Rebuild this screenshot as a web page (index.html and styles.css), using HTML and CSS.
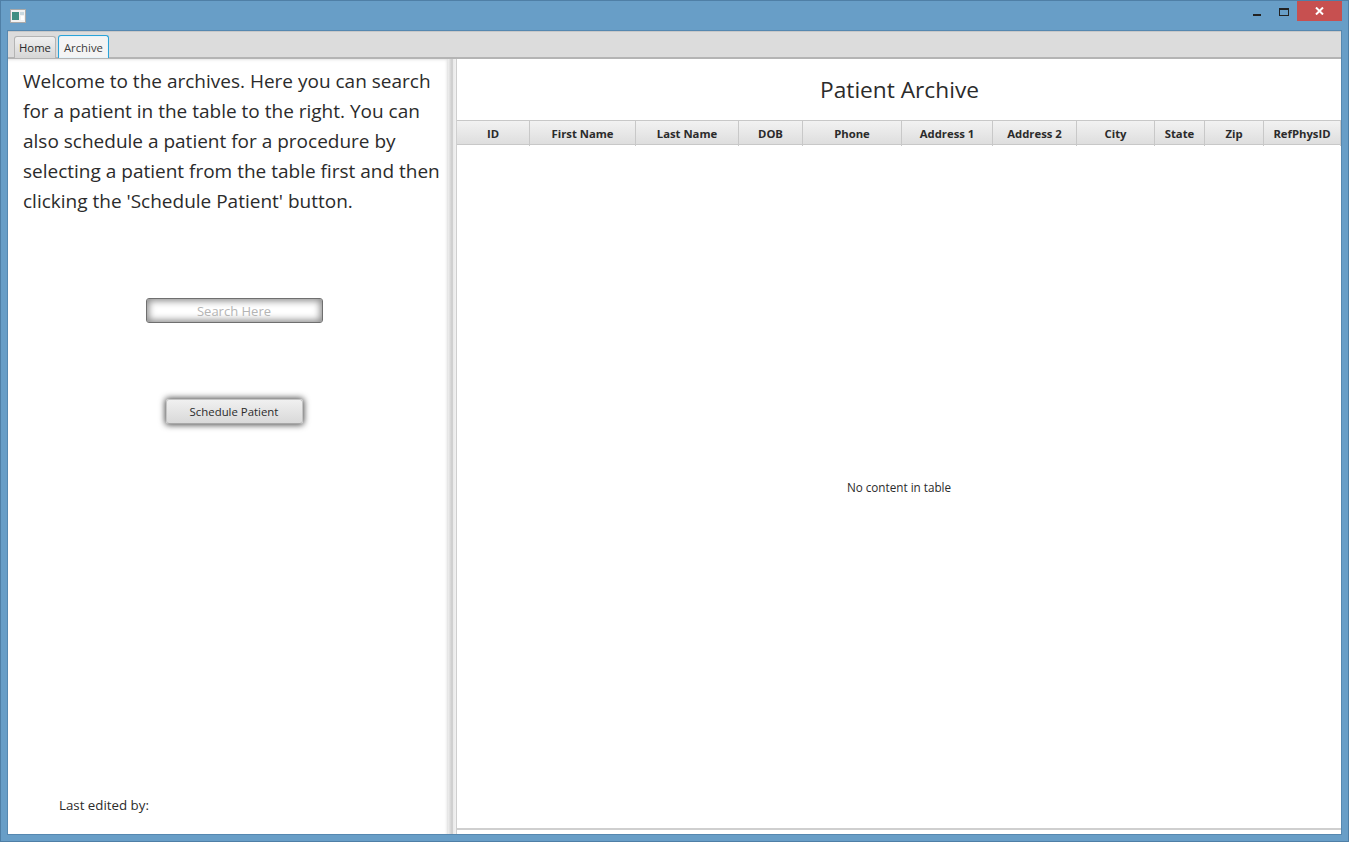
FILE: index.html
```html
<!DOCTYPE html>
<html lang="en">
<head>
<meta charset="utf-8">
<title>Patient Archive</title>
<link rel="stylesheet" href="styles.css">
</head>
<body>
<div class="window">
  <div class="titlebar">
    <svg class="app-icon" width="16" height="14" viewBox="0 0 16 14">
      <rect x="0.5" y="0.5" width="15" height="13" fill="#f2f2f2" stroke="#a9a9a9"/>
      <rect x="2" y="3" width="7" height="8" fill="#3f8f83"/>
      <rect x="10" y="3" width="4" height="3" fill="#c9d8df"/>
      <rect x="11" y="7" width="3" height="4" fill="#ffffff"/>
    </svg>
    <div class="controls">
      <svg class="ctl-min" width="8" height="3" viewBox="0 0 8 3"><rect width="8" height="2" y="1" fill="#222"/></svg>
      <svg class="ctl-max" width="10" height="8" viewBox="0 0 10 8"><rect x="0.5" y="0.5" width="9" height="7" fill="none" stroke="#222"/><rect width="10" height="2" fill="#222"/></svg>
      <div class="ctl-close">
        <svg width="9" height="8" viewBox="0 0 9 8"><path d="M1 0.5 L8 7.5 M8 0.5 L1 7.5" stroke="#fff" stroke-width="2" fill="none"/></svg>
      </div>
    </div>
  </div>
  <div class="client">
    <div class="tabbar">
      <div class="tab">Home</div>
      <div class="tab tab-active">Archive</div>
    </div>
    <div class="panes">
      <div class="left">
        <p class="intro">Welcome to the archives. Here you can search for a patient in the table to the right. You can also schedule a patient for a procedure by selecting a patient from the table first and then clicking the 'Schedule Patient' button.</p>
        <input class="search" type="text" placeholder="Search Here">
        <button class="schedule" type="button">Schedule Patient</button>
        <div class="edited">Last edited by:</div>
      </div>
      <div class="divider"></div>
      <div class="right">
        <h1 class="heading">Patient Archive</h1>
        <div class="thead">
          <div class="th">ID</div>
          <div class="th">First Name</div>
          <div class="th">Last Name</div>
          <div class="th">DOB</div>
          <div class="th">Phone</div>
          <div class="th">Address 1</div>
          <div class="th">Address 2</div>
          <div class="th">City</div>
          <div class="th">State</div>
          <div class="th">Zip</div>
          <div class="th">RefPhysID</div>
        </div>
        <div class="tbody">No content in table</div>
      </div>
    </div>
  </div>
</div>
</body>
</html>
```
FILE: styles.css
```css
* { box-sizing: border-box; }
html, body { margin: 0; height: 100%; overflow: hidden; }
body { font-family: "Open Sans", "Noto Sans", sans-serif; color: #2b2b2b; }

.window {
  width: 1349px;
  height: 842px;
  background: #689ec7;
  border: 1px solid #4f7fa6;
  display: flex;
  flex-direction: column;
  padding: 0 7px 7px;
}

.titlebar {
  height: 30px;
  flex: none;
  display: flex;
  justify-content: space-between;
  align-items: flex-start;
}
.app-icon { margin: 8px 0 0 2px; }
.controls { display: flex; align-items: flex-start; margin-right: -1px; }
.ctl-min { margin: 12px 18px 0 0; }
.ctl-max { margin: 7px 8px 0 0; }
.ctl-close {
  width: 45px;
  height: 20px;
  background: #c75050;
  display: flex;
  align-items: center;
  justify-content: center;
}

.client {
  flex: 1;
  min-height: 0;
  display: flex;
  flex-direction: column;
  background: #fff;
  box-shadow: 0 0 0 1px #5688b0;
}

.tabbar {
  height: 28px;
  flex: none;
  display: flex;
  gap: 2px;
  align-items: flex-end;
  padding-left: 6px;
  background: #dcdcdc;
  border-top: 1px solid #c8c8c8;
  border-bottom: 2px solid #b4b4b4;
  position: relative;
}
.tab {
  height: 22px;
  margin-bottom: -1px;
  padding: 0 4px;
  font-size: 11.3px;
  line-height: 21px;
  background: linear-gradient(#f0f0f0, #d6d6d6);
  border: 1px solid #b4b4b4;
  border-bottom: 0;
  border-radius: 3px 3px 0 0;
}
.tab-active {
  height: 23px;
  padding: 0 5px;
  line-height: 23px;
  background: #f4f4f4;
  border-color: #2ba3d8;
  border-width: 1px 1px 0;
  box-shadow: inset 0 0 0 1px #e6f3f9;
  color: #3a3a3a;
}

.panes { flex: 1; min-height: 0; display: flex; }

.left {
  width: 440px;
  flex: none;
  display: flex;
  flex-direction: column;
  align-items: center;
  padding: 7px 0 0 12px;
  box-shadow: inset 0 3px 3px -2px #e4e4e4, inset -3px 0 3px -2px #dcdcdc;
}
.intro {
  align-self: flex-start;
  width: 425px;
  margin: 0 0 0 3px;
  font-size: 19px;
  line-height: 30px;
}
.search {
  width: 177px;
  height: 25px;
  margin-top: 82px;
  border: 1px solid #6f6f6f;
  border-radius: 3px;
  box-shadow: inset 0 0 7px 2px #8c8c8c;
  background: #fff;
  padding: 0;
  font-family: inherit;
  font-size: 13px;
  text-align: center;
  outline: none;
}
.search::placeholder { color: #b4b4b4; opacity: 1; }
.schedule {
  width: 137px;
  height: 25px;
  margin-top: 76px;
  border: 1px solid #c4c4c4;
  border-bottom-color: #a8a8a8;
  border-radius: 3px;
  background: linear-gradient(#f0f0f0, #d9d9d9);
  box-shadow: 0 0 6px 1px #4a4a4a;
  color: #2b2b2b;
  font-family: inherit;
  font-size: 11.4px;
  padding: 0;
}
.edited {
  align-self: flex-start;
  margin: auto 0 20px 39px;
  font-size: 13.3px;
  line-height: 18px;
}

.divider {
  width: 8px;
  flex: none;
  background: linear-gradient(90deg, #efefef 0, #c8c8c8 55%, #c8c8c8 56%, #e8e8e8 57%, #f2f2f2 100%);
}

.right {
  flex: 1;
  min-width: 0;
  display: flex;
  flex-direction: column;
  padding-bottom: 4px;
  border-left: 1px solid #cfcfcf;
}
.heading {
  margin: 0;
  height: 61px;
  flex: none;
  display: flex;
  align-items: center;
  justify-content: center;
  font-size: 22.7px;
  font-weight: 400;
  padding-left: 1px;
}
.thead {
  display: grid;
  grid-template-columns: 73px 106px 103px 64px 99px 91px 84px 78px 50px 59px 77px 1px;
  height: 25px;
  flex: none;
  border-top: 1px solid #c8c8c8;
  border-bottom: 1px solid #c8c8c8;
  background: linear-gradient(#f2f2f2, #dedede);
}
.th {
  border-right: 1px solid #c8c8c8;
  font-size: 11.3px;
  font-weight: 700;
  line-height: 25px;
  text-align: center;
  white-space: nowrap;
  color: #2b2b2b;
}
.tbody {
  flex: 1;
  display: flex;
  align-items: center;
  justify-content: center;
  font-size: 11.7px;
  border-bottom: 2px solid #cfcfcf;
}
```
